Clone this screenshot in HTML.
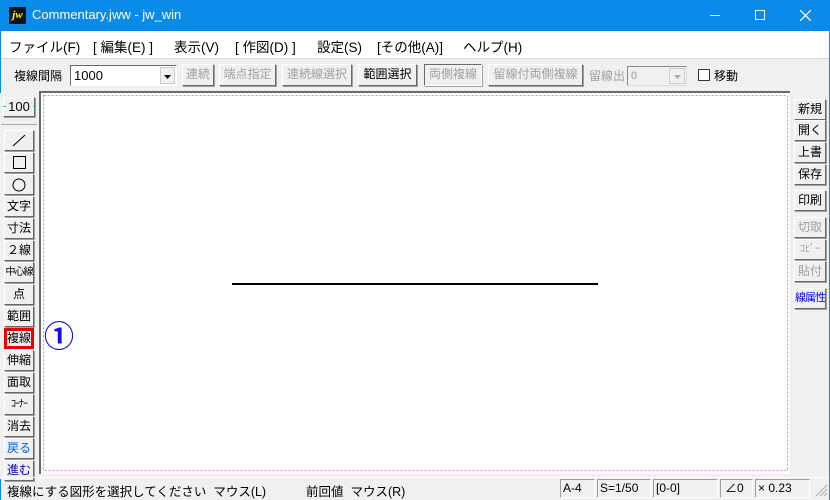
<!DOCTYPE html><html><head><meta charset="utf-8"><style>
*{margin:0;padding:0;box-sizing:border-box}
body{width:830px;height:500px;overflow:hidden;background:#f0f0f0;font-family:"Liberation Sans","Noto Sans CJK JP",sans-serif;position:relative}
.a{position:absolute}
.title{left:0;top:0;width:830px;height:31px;background:#0a8ae9;color:#fff;font-size:13px}
.menu{left:1px;top:31px;width:828px;height:27px;background:#fff;font-size:13.5px;color:#000}
.menu span{position:absolute;top:5px;white-space:nowrap}
.btn{position:absolute;background:#f0f0f0;border:1px solid;border-color:#fff #6a6a6a #6a6a6a #fff;box-shadow:1px 1px 0 #a0a0a0;font-size:12px;text-align:center;white-space:nowrap;overflow:hidden;color:#000}
.dis{color:#a0a0a0}
.tb{height:22px;top:64px;line-height:19px}
.lb{left:4px;width:30px;height:21px;line-height:19px;font-size:12px}
.rb{left:794px;width:32px;height:21px;line-height:19px;font-size:12px}
</style></head><body>
<div class="a" style="left:0;top:0;width:1px;height:500px;background:#0a8ae9"></div>
<div class="a" style="left:829px;top:0;width:1px;height:500px;background:#0a8ae9"></div>
<div class="a title">
 <div class="a" style="left:9px;top:7px;width:17px;height:17px;background:#111;color:#ff0;font:bold italic 11px 'Liberation Serif',serif;line-height:16px;text-align:center">jw</div>
 <div class="a" style="left:32px;top:7px">Commentary.jww - jw_win</div>
 <div class="a" style="left:710px;top:15px;width:10px;height:1px;background:#fff"></div>
 <div class="a" style="left:755px;top:10px;width:10px;height:10px;border:1px solid #fff"></div>
 <svg class="a" style="left:800px;top:10px" width="11" height="11"><path d="M0 0L11 11M11 0L0 11" stroke="#fff" stroke-width="1.2"/></svg>
</div>
<div class="a menu">
 <span style="left:8px">ファイル(F)</span><span style="left:92px">[ 編集(E) ]</span><span style="left:173px">表示(V)</span><span style="left:234px">[ 作図(D) ]</span><span style="left:316px">設定(S)</span><span style="left:376px">[その他(A)]</span><span style="left:462px">ヘルプ(H)</span>
</div>
<div class="a" style="left:1px;top:58px;width:828px;height:1px;background:#d8d8d8"></div>
<div class="a" style="left:14px;top:67px;font-size:12px">複線間隔</div>
<div class="a" style="left:70px;top:65px;width:107px;height:21px;background:#fff;border:1px solid;border-color:#6a6a6a #fff #fff #6a6a6a;font-size:13px;padding-left:3px;line-height:19px">1000</div>
<div class="a" style="left:160px;top:67px;width:15px;height:17px;background:#f0f0f0;border:1px solid #ccc"><svg width="13" height="15"><path d="M3 7h7l-3.5 4z" fill="#000"/></svg></div>
<div class="btn tb dis" style="left:182px;width:32px">連続</div>
<div class="btn tb dis" style="left:219px;width:57px">端点指定</div>
<div class="btn tb dis" style="left:282px;width:70px">連続線選択</div>
<div class="btn tb" style="left:358px;width:59px">範囲選択</div>
<div class="btn tb dis" style="left:424px;width:58px;border-color:#6a6a6a #fff #fff #6a6a6a">両側複線</div>
<div class="btn tb dis" style="left:488px;width:95px">留線付両側複線</div>
<div class="a dis" style="left:589px;top:67px;font-size:12px">留線出</div>
<div class="a" style="left:627px;top:66px;width:60px;height:20px;background:#f0f0f0;border:1px solid;border-color:#8a8a8a #ddd #ddd #8a8a8a;font-size:11px;color:#999;padding-left:3px;line-height:18px">0</div>
<div class="a" style="left:669px;top:68px;width:16px;height:16px;border:1px solid #ccc"><svg width="14" height="14"><path d="M4 6h7l-3.5 4z" fill="#aaa"/></svg></div>
<div class="a" style="left:698px;top:69px;width:12px;height:12px;background:#fff;border:1px solid #333"></div>
<div class="a" style="left:714px;top:67px;font-size:12px">移動</div>
<!-- canvas -->
<div class="a" style="left:39px;top:91px;width:751px;height:383px;background:#fff;border-top:2px solid #6a6a6a;border-left:2px solid #6a6a6a"></div>
<svg class="a" style="left:43px;top:95px" width="745" height="377"><rect x="0.5" y="0.5" width="744" height="375" fill="none" stroke="#f070f0" stroke-dasharray="2 2"/></svg>
<div class="a" style="left:232px;top:283px;width:366px;height:2px;background:#000"></div>
<div class="a" style="left:44px;top:320px;font-size:30px;line-height:36px;color:#1010e0;font-weight:bold">①</div>
<!-- left -->
<div class="a" style="left:0;top:93px;width:38px;height:386px;background:#f0f0f0"></div>
<div class="btn" style="left:3px;top:97px;width:32px;height:20px;font-size:13px;line-height:18px">100</div>
<div class="a" style="left:3px;top:106px;width:3px;height:1px;background:#0cc"></div><div class="a" style="left:33px;top:106px;width:3px;height:1px;background:#0cc"></div>
<div class="a" style="left:1px;top:124px;width:36px;height:1px;background:#aaa"></div>
<div class="btn lb" style="top:130px"><svg width="28" height="19"><path d="M8 15L20 4" stroke="#000"/></svg></div>
<div class="btn lb" style="top:152px"><svg width="28" height="19"><rect x="8.5" y="3.5" width="12" height="12" fill="none" stroke="#000"/></svg></div>
<div class="btn lb" style="top:174px"><svg width="28" height="19"><circle cx="14" cy="10" r="6" fill="none" stroke="#000"/></svg></div>
<div class="btn lb" style="top:196px">文字</div>
<div class="btn lb" style="top:218px">寸法</div>
<div class="btn lb" style="top:240px">２線</div>
<div class="btn lb" style="top:262px;font-size:10px;letter-spacing:-1px">中心線</div>
<div class="btn lb" style="top:284px">点</div>
<div class="btn lb" style="top:306px">範囲</div>
<div class="btn lb" style="top:328px;border:3px solid #e00;line-height:15px;box-shadow:none">複線</div>
<div class="btn lb" style="top:350px">伸縮</div>
<div class="btn lb" style="top:372px">面取</div>
<div class="btn lb" style="top:394px;font-size:10px;letter-spacing:-1px">ｺｰﾅｰ</div>
<div class="btn lb" style="top:416px">消去</div>
<div class="btn lb" style="top:438px;color:#0060e0">戻る</div>
<div class="btn lb" style="top:460px;color:#0000c0">進む</div>
<!-- right -->
<div class="btn rb" style="top:99px">新規</div>
<div class="btn rb" style="top:120px">開く</div>
<div class="btn rb" style="top:142px">上書</div>
<div class="btn rb" style="top:164px">保存</div>
<div class="btn rb" style="top:190px">印刷</div>
<div class="btn rb dis" style="top:217px">切取</div>
<div class="btn rb dis" style="top:239px;font-size:10px">ｺﾋﾟｰ</div>
<div class="btn rb dis" style="top:261px">貼付</div>
<div class="btn rb" style="top:288px;color:#0000e0;font-size:11px;letter-spacing:-1px">線属性</div>
<!-- status -->
<div class="a" style="left:1px;top:477px;width:828px;height:1px;background:#fff"></div>
<div class="a" style="left:7px;top:481px;font-size:12.5px;white-space:nowrap">複線にする図形を選択してください&nbsp; マウス(L)</div>
<div class="a" style="left:306px;top:481px;font-size:12.5px;white-space:nowrap">前回値&nbsp; マウス(R)</div>
<div class="a" style="left:560px;top:479px;width:35px;height:19px;border:1px solid;border-color:#a0a0a0 #fff #fff #a0a0a0;font-size:12px;padding-left:2px;line-height:17px">A-4</div>
<div class="a" style="left:597px;top:479px;width:54px;height:19px;border:1px solid;border-color:#a0a0a0 #fff #fff #a0a0a0;font-size:12px;padding-left:2px;line-height:17px">S=1/50</div>
<div class="a" style="left:653px;top:479px;width:65px;height:19px;border:1px solid;border-color:#a0a0a0 #fff #fff #a0a0a0;font-size:12px;padding-left:2px;line-height:17px">[0-0]</div>
<div class="a" style="left:720px;top:479px;width:33px;height:19px;border:1px solid;border-color:#a0a0a0 #fff #fff #a0a0a0;font-size:12px;padding-left:4px;line-height:17px">∠0</div>
<div class="a" style="left:755px;top:479px;width:55px;height:19px;border:1px solid;border-color:#a0a0a0 #fff #fff #a0a0a0;font-size:12px;padding-left:2px;line-height:17px">× 0.23</div>
<svg class="a" style="left:815px;top:484px" width="13" height="13"><path d="M12 1L1 12M12 5L5 12M12 9L9 12" stroke="#aaa"/></svg>
</body></html>
